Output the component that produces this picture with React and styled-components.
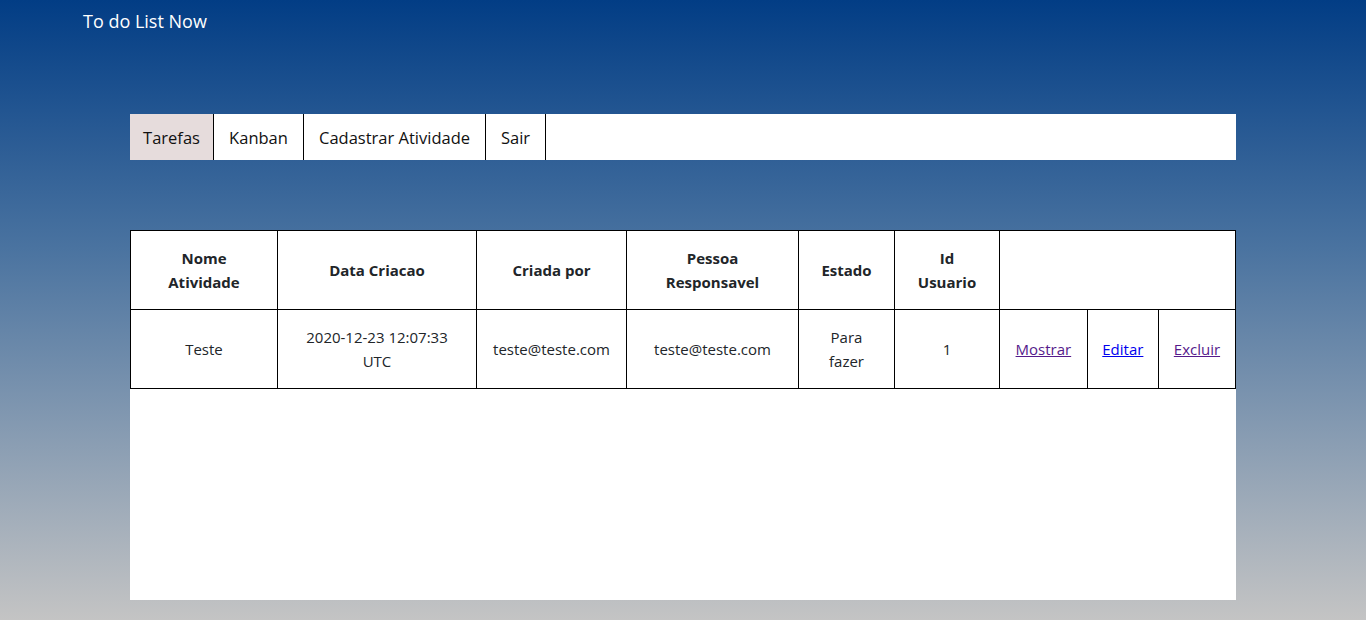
import React from 'react'
import styled, { createGlobalStyle } from 'styled-components'

const GlobalStyle = createGlobalStyle`
    html, body {
        margin: 0;
        padding: 0;
    }
    body {
        font-family: "Open Sans", "Noto Sans", sans-serif;
        background: linear-gradient(180deg, #023d85 0%, #4a73a0 40%, #c4c4c4 100%);
        min-height: 620px;
        color: #212529;
    }
`;

const Page = styled.div`
    min-height: 620px;
    padding-bottom: 20px;
    box-sizing: border-box;
`;

const TopBar = styled.header`
    padding: 8px 0 0 83px;
    height: 114px;
    box-sizing: border-box;
`;

const Brand = styled.span`
    color: #fff;
    font-size: 18px;
    line-height: 26px;
`;

const Container = styled.div`
    width: 1106px;
    margin-left: 130px;
`;

const Nav = styled.nav`
    display: flex;
    background: #fff;
    height: 46px;
`;

const NavItem = styled.a`
    display: flex;
    align-items: center;
    justify-content: center;
    width: ${p => p.$w}px;
    box-sizing: border-box;
    border-right: 1px solid #000;
    font-size: 16.5px;
    color: #111;
    text-decoration: none;
    background: ${p => (p.$active ? '#e6dcdc' : '#fff')};
    cursor: pointer;
`;

const Panel = styled.div`
    margin-top: 70px;
    background: #fff;
    height: 370px;
`;

const Table = styled.table`
    width: 100%;
    border-collapse: collapse;
    font-size: 15px;
    line-height: 24px;
    text-align: center;
`;

const Th = styled.th`
    border: 1px solid #000;
    padding: 15px 10px;
    font-weight: 700;
    width: ${p => p.$w || 'auto'};
    color: #212529;
`;

const Td = styled.td`
    border: 1px solid #000;
    padding: 15px 10px;
    color: #212529;
`;

const ActionLink = styled.a`
    color: ${p => (p.$visited ? '#551a8b' : '#0000ee')};
    text-decoration: underline;
    cursor: pointer;
`;

const App = () => {
    return (
        <Page>
            <GlobalStyle />
            <TopBar>
                <Brand>To do List Now</Brand>
            </TopBar>
            <Container>
                <Nav>
                    <NavItem $w={84} $active>Tarefas</NavItem>
                    <NavItem $w={90}>Kanban</NavItem>
                    <NavItem $w={182}>Cadastrar Atividade</NavItem>
                    <NavItem $w={60}>Sair</NavItem>
                </Nav>
                <Panel>
                    <Table>
                        <thead>
                            <tr>
                                <Th $w="126px">Nome<br />Atividade</Th>
                                <Th $w="178px">Data Criacao</Th>
                                <Th $w="129px">Criada por</Th>
                                <Th $w="151px">Pessoa<br />Responsavel</Th>
                                <Th $w="75px">Estado</Th>
                                <Th $w="84px">Id<br />Usuario</Th>
                                <Th colSpan={3}></Th>
                            </tr>
                        </thead>
                        <tbody>
                            <tr>
                                <Td>Teste</Td>
                                <Td>2020-12-23 12:07:33<br />UTC</Td>
                                <Td>teste@teste.com</Td>
                                <Td>teste@teste.com</Td>
                                <Td>Para<br />fazer</Td>
                                <Td>1</Td>
                                <Td><ActionLink $visited>Mostrar</ActionLink></Td>
                                <Td><ActionLink>Editar</ActionLink></Td>
                                <Td><ActionLink $visited>Excluir</ActionLink></Td>
                            </tr>
                        </tbody>
                    </Table>
                </Panel>
            </Container>
        </Page>
    )
}

export default App;
